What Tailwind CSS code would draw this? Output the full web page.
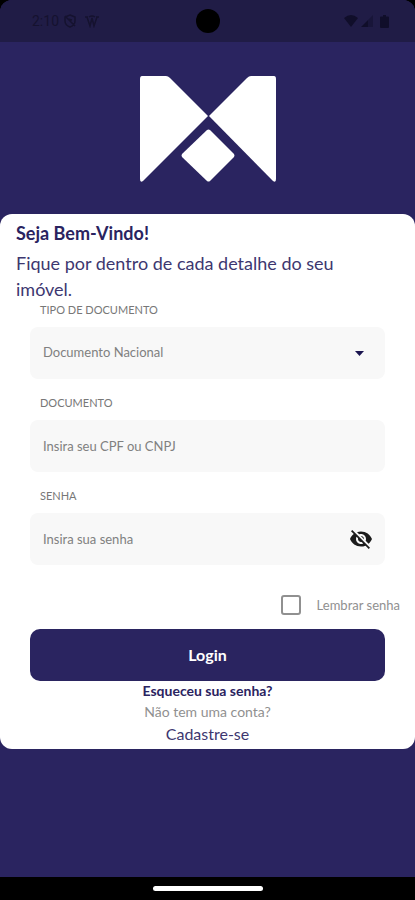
<!DOCTYPE html>
<html lang="pt-BR">
<head>
<meta charset="utf-8">
<meta name="viewport" content="width=device-width, initial-scale=1">
<title>Login</title>
<script src="https://cdn.jsdelivr.net/npm/@tailwindcss/browser@4"></script>
</head>
<body class="bg-black font-['Lato',sans-serif] text-[#2a2360]">
<div class="flex min-h-screen flex-col overflow-hidden rounded-t-[12px] bg-[#2a2460]">
  <header class="relative flex h-[42px] items-center justify-between bg-[#201c46] pr-[26px] pl-8 text-[#100e2a]">
    <div class="flex items-center gap-1 font-['Roboto',sans-serif] text-sm text-[#15122f]">
      <span>2:10</span>
      <svg class="size-[14px]" viewBox="0 0 14 14" fill="none" stroke="currentColor" stroke-width="1.5"><path d="M7 1 12 3v4c0 3-2 5-5 6C4 12 2 10 2 7V3ZM2 2l10 10M5 5l4 1"/></svg>
      <svg class="ml-1 size-[14px]" viewBox="0 0 14 14" fill="none" stroke="currentColor" stroke-width="1.5"><path d="M0 3h3M11 3h3M2 3l3 9 2-8 2 8 3-9M4 3q3-2 6 0"/></svg>
    </div>
    <span class="absolute top-[9px] left-1/2 size-6 -translate-x-1/2 rounded-full bg-black"></span>
    <div class="flex items-center gap-[3px]">
      <svg class="h-3 w-[14px]" viewBox="0 0 14 12" fill="currentColor"><path d="M0 3Q7-3 14 3L7 12Z"/></svg>
      <svg class="size-3" viewBox="0 0 12 12" fill="currentColor"><path d="M0 12 7 5v7Z"/><path d="M7 5l5-5v12H7Z" opacity=".45"/></svg>
      <svg class="ml-1 h-[13px] w-[9px]" viewBox="0 0 9 13" fill="currentColor"><path d="M3 0h3v1.500h2q1 0 1 1V12q0 1-1 1H1q-1 0-1-1V2.500q0-1 1-1h2Z"/></svg>
    </div>
  </header>

  <main class="flex flex-1 flex-col">
    <div class="flex justify-center pt-[34px] pb-8">
      <svg class="h-[106px] w-[138px]" viewBox="0 0 138 106" fill="#fff" role="img" aria-label="Logo">
        <path d="M3 0H27Q29 0 31 2L69 40 4 105Q1 107 1 103V3Q1 0 3 0Z"/>
        <path d="M135 0H112Q110 0 108 2L70 40 134 105Q137 107 137 103V3Q137 0 135 0Z"/>
        <path d="M68 54Q69.500 53 71 54L95 78Q96 79.500 95 81L71 105Q69.500 106 68 105L43 81Q42 79.500 43 78Z"/>
      </svg>
    </div>

    <form class="rounded-xl bg-white pt-[7px] pb-1">
      <div class="pr-12 pl-4">
        <h1 class="text-lg/6 font-bold">Seja Bem-Vindo!</h1>
        <p class="mt-[5px] text-lg/[26px] text-[#3d3770]">Fique por dentro de cada detalhe do seu imóvel.</p>
      </div>

      <div class="flex flex-col gap-4 px-[30px]">
        <div>
          <label for="tipo" class="block px-[10px] text-[11px]/4 text-[#777]">TIPO DE DOCUMENTO</label>
          <div class="relative mt-[9px]">
            <select id="tipo" class="h-[52px] w-full appearance-none rounded-lg bg-[#f8f8f8] px-[13px] text-[13px] text-[#808080]"><option>Documento Nacional</option></select>
            <svg class="pointer-events-none absolute top-6 right-[21px] h-[5px] w-[9px]" viewBox="0 0 9 5" fill="#1b1550"><path d="M0 0h9L4.500 5Z"/></svg>
          </div>
        </div>
        <div>
          <label for="doc" class="block px-[10px] text-[11px]/4 text-[#777]">DOCUMENTO</label>
          <input id="doc" type="text" placeholder="Insira seu CPF ou CNPJ" class="mt-[9px] block h-[52px] w-full rounded-lg bg-[#f8f8f8] px-[13px] text-[13px] placeholder:text-[#808080]">
        </div>
        <div>
          <label for="senha" class="block px-[10px] text-[11px]/4 text-[#777]">SENHA</label>
          <div class="relative mt-[9px]">
            <input id="senha" type="password" placeholder="Insira sua senha" class="block h-[52px] w-full rounded-lg bg-[#f8f8f8] pr-12 pl-[13px] text-[13px] placeholder:text-[#808080]">
            <button type="button" aria-label="Mostrar senha" class="absolute top-[14px] right-3 size-6 text-[#1c1c1c]">
              <svg viewBox="0 0 24 24" fill="currentColor"><path d="M12 7c2.760 0 5 2.240 5 5 0 .650-.130 1.260-.360 1.830l2.920 2.920c1.510-1.260 2.700-2.890 3.430-4.750-1.730-4.390-6-7.500-11-7.500-1.400 0-2.740.250-3.980.700l2.160 2.160C10.740 7.130 11.350 7 12 7zM2 4.270l2.280 2.280.460.460C3.080 8.300 1.780 10.020 1 12c1.730 4.390 6 7.500 11 7.500 1.550 0 3.030-.300 4.380-.840l.420.420L19.730 22 21 20.730 3.270 3 2 4.270zM7.530 9.800l1.550 1.550c-.050.210-.080.430-.080.650 0 1.660 1.340 3 3 3 .220 0 .440-.030.650-.080l1.550 1.550c-.670.330-1.410.530-2.200.530-2.760 0-5-2.240-5-5 0-.790.200-1.530.530-2.200zm4.310-.780l3.150 3.150.020-.160c0-1.660-1.340-3-3-3l-.170.010z"/></svg>
            </button>
          </div>
        </div>
      </div>

      <div class="mt-[30px] flex items-center justify-end gap-4 px-[15px]">
        <input id="lembrar" type="checkbox" class="size-5 appearance-none rounded-[3px] border-2 border-[#909090] bg-white checked:bg-[#2a2460]">
        <label for="lembrar" class="text-[13px]/5 text-[#909090]">Lembrar senha</label>
      </div>

      <div class="mt-[14px] px-[30px]">
        <button type="submit" class="block h-[52px] w-full rounded-[10px] bg-[#2a2460] text-base font-bold text-white">Login</button>
      </div>
      <div class="flex flex-col items-center">
        <a href="#" class="text-sm/5 font-bold">Esqueceu sua senha?</a>
        <p class="text-sm/[22px] text-[#909090]">Não tem uma conta?</p>
        <a href="#" class="text-base/[22px] text-[#3d3770]">Cadastre-se</a>
      </div>
    </form>
  </main>

  <footer class="flex h-[23px] items-center justify-center bg-black">
    <span class="h-[5px] w-[110px] rounded-full bg-white"></span>
  </footer>
</div>
</body>
</html>
